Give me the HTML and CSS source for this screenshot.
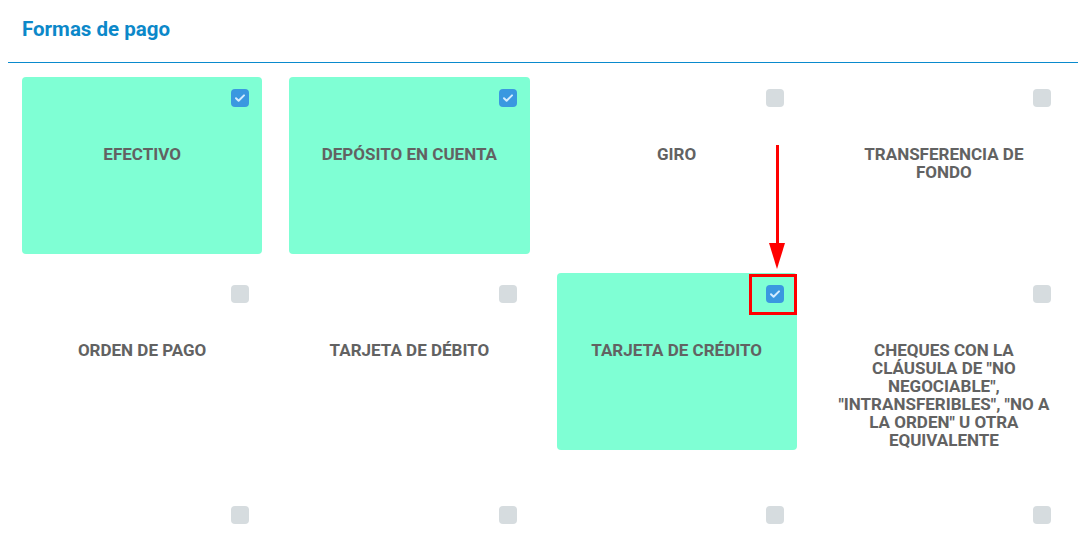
FILE: index.html
```
<!DOCTYPE html>
<html lang="es">
<head>
  <meta charset="UTF-8" />
  <title>Formas de pago</title>
  <link rel="stylesheet" href="styles.css">
</head>
<body>
  <!-- Encabezado -->
  <div class="panel-header">
    <h2 class="panel-title">Formas de pago</h2>
  </div>

  <!-- Opciones de pago -->
  <div class="pay-grid">
    <div class="pay-card selected">
      <span class="check on"><svg viewBox="0 0 18 18"><path d="M5 9.2l2.6 2.5L13 6.4"/></svg></span>
      <div class="pay-label">Efectivo</div>
    </div>
    <div class="pay-card selected">
      <span class="check on"><svg viewBox="0 0 18 18"><path d="M5 9.2l2.6 2.5L13 6.4"/></svg></span>
      <div class="pay-label">Depósito en cuenta</div>
    </div>
    <div class="pay-card">
      <span class="check"></span>
      <div class="pay-label">Giro</div>
    </div>
    <div class="pay-card">
      <span class="check"></span>
      <div class="pay-label">Transferencia de fondo</div>
    </div>

    <div class="pay-card">
      <span class="check"></span>
      <div class="pay-label">Orden de pago</div>
    </div>
    <div class="pay-card">
      <span class="check"></span>
      <div class="pay-label">Tarjeta de débito</div>
    </div>
    <div class="pay-card selected marked">
      <span class="check on"><svg viewBox="0 0 18 18"><path d="M5 9.2l2.6 2.5L13 6.4"/></svg></span>
      <div class="pay-label">Tarjeta de crédito</div>
      <!-- marca en rojo -->
      <span class="mark-arrow"></span>
      <span class="mark-box"></span>
    </div>
    <div class="pay-card">
      <span class="check"></span>
      <div class="pay-label">Cheques con la cláusula de "no negociable", "intransferibles", "no a la orden" u otra equivalente</div>
    </div>

    <div class="pay-card">
      <span class="check"></span>
      <div class="pay-label"></div>
    </div>
    <div class="pay-card">
      <span class="check"></span>
      <div class="pay-label"></div>
    </div>
    <div class="pay-card">
      <span class="check"></span>
      <div class="pay-label"></div>
    </div>
    <div class="pay-card">
      <span class="check"></span>
      <div class="pay-label"></div>
    </div>
  </div>
</body>
</html>
```

FILE: styles.css
```
/* Base */
html, body {
  margin: 0;
  padding: 0;
  background: #fff;
  font-family: Roboto, "Liberation Sans", Arial, sans-serif;
  overflow: hidden;
}
body {
  margin: 8px 6px 0 8px;
}

/* Encabezado */
.panel-header {
  padding: 10px 14px 22px;
  border-bottom: 1px solid #0a8acd;
}
.panel-title {
  margin: 0;
  font-size: 20.5px;
  line-height: 22px;
  font-weight: 700;
  color: #0c88c9;
}

/* Grilla de opciones */
.pay-grid {
  display: grid;
  grid-template-columns: repeat(4, 1fr);
  column-gap: 27px;
  row-gap: 19px;
  padding: 14px 14px 0;
  align-items: start;
}
.pay-card {
  position: relative;
  display: flex;
  flex-direction: column;
  min-height: 177px;
  box-sizing: border-box;
  padding: 12px 13px 26px;
  border-radius: 4px;
}
.pay-card.selected {
  background-color: #7fffd4;
}

/* Casilla */
.check {
  align-self: flex-end;
  width: 18px;
  height: 18px;
  border-radius: 4px;
  background-color: #d6dcdf;
}
.check.on {
  background-color: #3a98e0;
}
.check svg {
  display: block;
  width: 18px;
  height: 18px;
}
.check svg path {
  fill: none;
  stroke: #d4ecff;
  stroke-width: 2;
  stroke-linecap: round;
  stroke-linejoin: round;
}

.pay-label {
  margin-top: 38px;
  text-align: center;
  text-transform: uppercase;
  font-size: 17px;
  line-height: 18px;
  font-weight: 700;
  color: #626262;
}

/* Flecha y recuadro rojos */
.mark-arrow {
  position: absolute;
  left: 219px;
  top: -128px;
  width: 3px;
  height: 100px;
  background: #f00;
}
.mark-arrow::after {
  content: "";
  position: absolute;
  left: -7px;
  bottom: -24px;
  border-left: 8.5px solid transparent;
  border-right: 8.5px solid transparent;
  border-top: 26px solid #f00;
}
.mark-box {
  position: absolute;
  left: 192px;
  top: 1px;
  width: 42px;
  height: 35px;
  border: 3px solid #f00;
}
```
